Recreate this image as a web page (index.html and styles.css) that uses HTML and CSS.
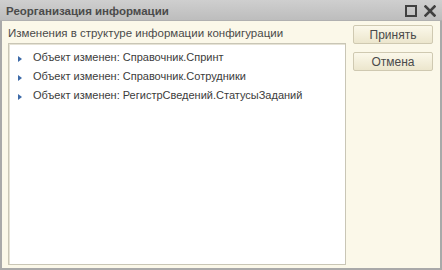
FILE: index.html
```html
<!DOCTYPE html>
<html>
<head>
<meta charset="utf-8">
<link rel="stylesheet" href="styles.css">
</head>
<body>
<div class="window">
  <div class="titlebar">
    <span class="title">Реорганизация информации</span>
    <div class="controls">
      <svg width="12" height="12" viewBox="0 0 12 12"><rect x="1" y="1" width="10" height="10" fill="none" stroke="#404040" stroke-width="2"/></svg>
      <svg width="12" height="12" viewBox="0 0 12 12"><path d="M1.5 1.5 L10.5 10.5 M10.5 1.5 L1.5 10.5" stroke="#404040" stroke-width="2.6" stroke-linecap="square"/></svg>
    </div>
  </div>
  <div class="body">
    <div class="main">
      <div class="label">Изменения в структуре информации конфигурации</div>
      <div class="list">
        <div class="item"><span class="arrow"></span>Объект изменен: Справочник.Спринт</div>
        <div class="item"><span class="arrow"></span>Объект изменен: Справочник.Сотрудники</div>
        <div class="item"><span class="arrow"></span>Объект изменен: РегистрСведений.СтатусыЗаданий</div>
      </div>
    </div>
    <div class="side">
      <button class="btn">Принять</button>
      <button class="btn">Отмена</button>
    </div>
  </div>
</div>
</body>
</html>
```
FILE: styles.css
```css
html, body {
  margin: 0;
  padding: 0;
  width: 442px;
  height: 270px;
  overflow: hidden;
  font-family: "Liberation Sans", Arial, sans-serif;
}
.window {
  box-sizing: border-box;
  width: 442px;
  height: 270px;
  border: 2px solid #a9a9a9;
  border-top: none;
  background: #fbf8e9;
  display: flex;
  flex-direction: column;
}
.titlebar {
  box-sizing: border-box;
  height: 21px;
  margin: 0 -2px;
  background: linear-gradient(#cfcfcf, #bdbdbd);
  border-bottom: 1px solid #b0b0b0;
  display: flex;
  align-items: center;
  justify-content: space-between;
  padding: 2px 6px 0 6px;
  flex: none;
}
.title {
  font-weight: bold;
  font-size: 11.5px;
  color: #4b4b4b;
}
.controls {
  display: flex;
  gap: 7px;
  align-items: center;
}
.body {
  flex: 1;
  display: flex;
  padding: 4px 6px 3px 6px;
  gap: 6px;
  min-height: 0;
}
.main {
  flex: 1;
  display: flex;
  flex-direction: column;
}
.label {
  font-size: 11.5px;
  color: #4a4a4a;
  height: 16px;
  line-height: 16px;
}
.list {
  flex: 1;
  margin-top: 2px;
  background: #fff;
  border: 1px solid #c9c6b6;
  box-shadow: inset 1px 1px 0 #e6e3d6;
  padding-top: 4px;
}
.item {
  font-size: 11px;
  color: #3c3c3c;
  height: 19px;
  line-height: 19px;
  display: flex;
  align-items: center;
  padding-left: 9px;
}
.arrow {
  width: 0;
  height: 0;
  border-top: 3.5px solid transparent;
  border-bottom: 3.5px solid transparent;
  border-left: 4px solid #3d6aa8;
  margin-right: 11px;
  margin-top: 2px;
}
.side {
  width: 82px;
  display: flex;
  flex-direction: column;
  gap: 8px;
}
.btn {
  height: 19px;
  width: 80px;
  margin-left: 1px;
  font-family: "Liberation Sans", Arial, sans-serif;
  font-size: 12px;
  color: #4a4a4a;
  background: linear-gradient(#fbf8ea, #ece6cd);
  border: 1px solid #cfc9b1;
  border-radius: 2px;
  padding: 0;
}
```
